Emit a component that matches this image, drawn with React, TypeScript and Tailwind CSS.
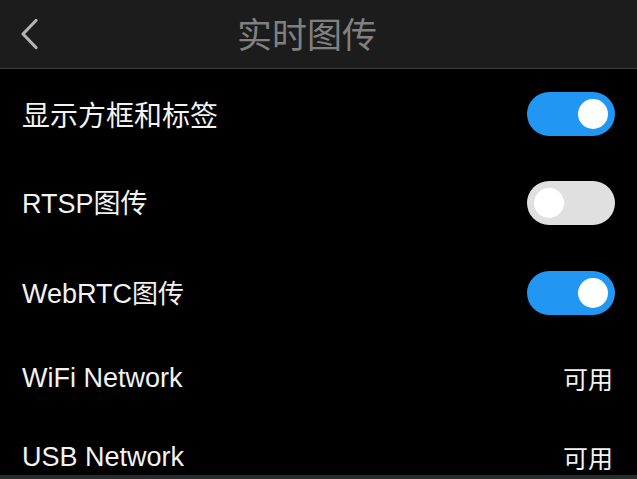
import { useState } from 'react';

const cjk = { fontFamily: '"Noto Sans CJK SC", "Noto Sans", sans-serif' };
const latin = { fontFamily: '"Liberation Sans", "Noto Sans CJK SC", sans-serif' };

const Toggle = ({ on, onClick }: { on: boolean; onClick: () => void }) => (
    <button
        onClick={onClick}
        className={`flex items-center w-[88px] h-[44px] rounded-full px-[7px] ${
            on ? 'bg-[#2196f3] justify-end' : 'bg-[#e0e0e0] justify-start'
        }`}
    >
        <span className="block w-[30px] h-[30px] rounded-full bg-white" />
    </button>
);

export default function App() {
    const [flags, setFlags] = useState({ box: true, rtsp: false, webrtc: true });

    return (
        <div className="w-[637px] h-[479px] bg-black flex flex-col overflow-hidden" style={cjk}>
            <div className="relative h-[69px] shrink-0 bg-[#1c1c1c] border-b border-[#3c3c3c] flex items-center justify-center pr-[23px]">
                <button className="absolute left-[18px] top-[18px]">
                    <svg width="22" height="32" viewBox="0 0 22 32" fill="none">
                        <path d="M18 2.5 L5 16 L18 29.5" stroke="#b4b4b4" strokeWidth="3.2" strokeLinecap="round" strokeLinejoin="round" />
                    </svg>
                </button>
                <span className="text-[35px] leading-none text-[#808080] -mt-[4px]">实时图传</span>
            </div>

            <div className="flex flex-col flex-1 min-h-0 overflow-hidden text-[#f2f2f2] leading-none">
                <div className="h-[89px] shrink-0 flex items-center justify-between px-[22px]">
                    <span className="text-[28px]">显示方框和标签</span>
                    <Toggle on={flags.box} onClick={() => setFlags({ ...flags, box: !flags.box })} />
                </div>
                <div className="h-[90px] shrink-0 flex items-center justify-between px-[22px]">
                    <span className="text-[27px]" style={latin}>
                        RTSP<span className="text-[27px]" style={cjk}>图传</span>
                    </span>
                    <Toggle on={flags.rtsp} onClick={() => setFlags({ ...flags, rtsp: !flags.rtsp })} />
                </div>
                <div className="h-[90px] shrink-0 flex items-center justify-between px-[22px]">
                    <span className="text-[27px]" style={latin}>
                        WebRTC<span className="text-[26px]" style={cjk}>图传</span>
                    </span>
                    <Toggle on={flags.webrtc} onClick={() => setFlags({ ...flags, webrtc: !flags.webrtc })} />
                </div>
                <div className="h-[80px] shrink-0 flex items-center justify-between pl-[22px] pr-[24px]">
                    <span className="text-[27px]" style={latin}>WiFi Network</span>
                    <span className="text-[25px]">可用</span>
                </div>
                <div className="h-[78px] shrink-0 flex items-center justify-between pl-[22px] pr-[24px]">
                    <span className="text-[27px]" style={latin}>USB Network</span>
                    <span className="text-[25px]">可用</span>
                </div>
            </div>
            <div className="h-[4px] shrink-0 bg-[#272c2f]" />
        </div>
    );
}
